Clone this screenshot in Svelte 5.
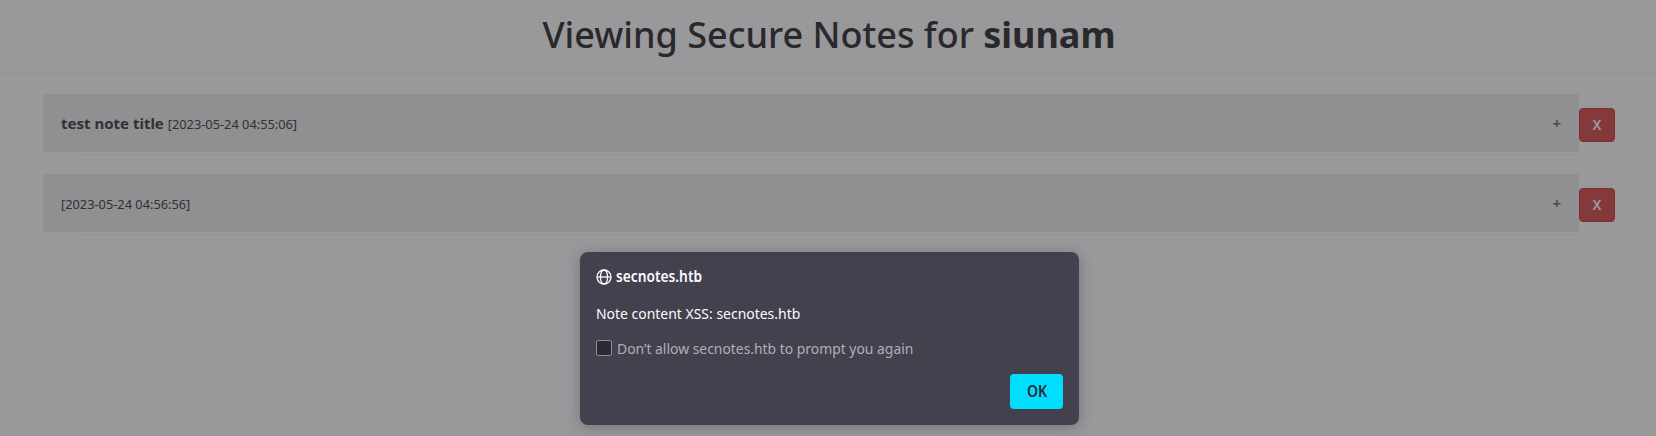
<script>
  const notes = [
    { title: 'test note title', time: '[2023-05-24 04:55:06]' },
    { title: '', time: '[2023-05-24 04:56:56]' }
  ];
</script>

<div class="page">
  <header><h1>Viewing Secure Notes for <b>siunam</b></h1></header>
  <main>
    {#each notes as note}
      <div class="row">
        <div class="note">
          <button class="accordion">
            <span class="label">{#if note.title}<b>{note.title}</b>{' '}{/if}<small>{note.time}</small></span>
            <span class="plus">+</span>
          </button>
          <div class="panel"></div>
        </div>
        <button class="remove">X</button>
      </div>
    {/each}
  </main>
</div>
<div class="overlay">
  <div class="dialog" role="dialog">
    <div class="origin">
      <svg width="16" height="16" viewBox="0 0 16 16" fill="none" stroke="#fbfbfe" stroke-width="1.3">
        <circle cx="8" cy="8" r="7" />
        <ellipse cx="8" cy="8" rx="3.6" ry="7" />
        <path d="M1 8h14" />
      </svg>
      <span class="host">secnotes.htb</span>
    </div>
    <div class="message">Note content XSS: secnotes.htb</div>
    <div class="check"><span class="box"></span><span class="check-text">Don’t allow secnotes.htb to prompt you again</span></div>
    <div class="actions"><button class="ok"><span>OK</span></button></div>
  </div>
</div>

<style>
  :global(body) { overflow: hidden; background: #fff; }
  .page, .overlay, .page *, .overlay * { box-sizing: border-box; }
  .page { height: 436px; font-family: "Noto Sans", sans-serif; color: #333; }
  button { font-family: inherit; border: 0; margin: 0; }
  header { height: 74px; border-bottom: 1px solid #eee; text-align: center; padding: 15px 0 0 2px; }
  h1 { margin: 0; font-size: 36px; line-height: 40px; font-weight: 500; }
  h1 b { font-weight: 700; }
  main { padding: 20px 41px 0 43px; }
  .row { display: flex; height: 80px; }
  .note { flex: 1; }
  .accordion { display: flex; align-items: center; justify-content: space-between; width: 100%; height: 58px; padding: 0 18px; background: #eee; color: #444; font-size: 15px; line-height: 21px; text-align: left; }
  .label { padding-top: 2px; }
  .label b { font-weight: 700; }
  small { font-size: 12.8px; }
  .plus { font-size: 15px; font-weight: 700; color: #777; }
  .panel { margin-left: 37px; margin-right: 3px; margin-top: 2px; height: 1px; background: #f6f6f6; box-shadow: 0 1px 1px rgba(0, 0, 0, .03); }
  .remove { width: 36px; height: 34px; margin-top: 14px; padding: 0; border: 1px solid #d43f3a; border-radius: 4px; background: #d9534f; color: #fff; font-size: 14px; line-height: 20px; font-weight: 600; }
  .overlay { position: absolute; inset: 0; background: rgba(28, 27, 34, .45); }
  .dialog { position: absolute; left: 580px; top: 252px; width: 499px; height: 173px; padding: 15px 16px; border-radius: 8px; background: #42414d; box-shadow: 0 2px 14px rgba(58, 57, 68, .4); color: #fbfbfe; font-family: "Noto Sans", sans-serif; font-size: 15.3px; line-height: 18px; white-space: nowrap; }
  .origin { display: flex; align-items: center; height: 18px; gap: 4px; font-weight: 600; }
  .origin svg { margin-top: 1px; }
  .host { transform: scaleX(.898); transform-origin: left; }
  .message { margin-top: 19px; height: 18px; transform: scaleX(.912); transform-origin: left; }
  .check { display: flex; align-items: center; height: 18px; margin-top: 17px; gap: 5px; color: #afafba; }
  .check-text { transform: scaleX(.908); transform-origin: left; }
  .box { width: 16px; height: 16px; border: 1px solid #8f8f9d; border-radius: 2px; background: #2b2a33; }
  .actions { display: flex; justify-content: flex-end; margin-top: 17px; }
  .ok { width: 53px; height: 35px; padding: 0 0 2px; border-radius: 4px; background: #00ddff; color: #2b2a33; font-size: 15.3px; font-weight: 600; }
  .ok span { display: inline-block; transform: scaleX(.92); }
</style>
